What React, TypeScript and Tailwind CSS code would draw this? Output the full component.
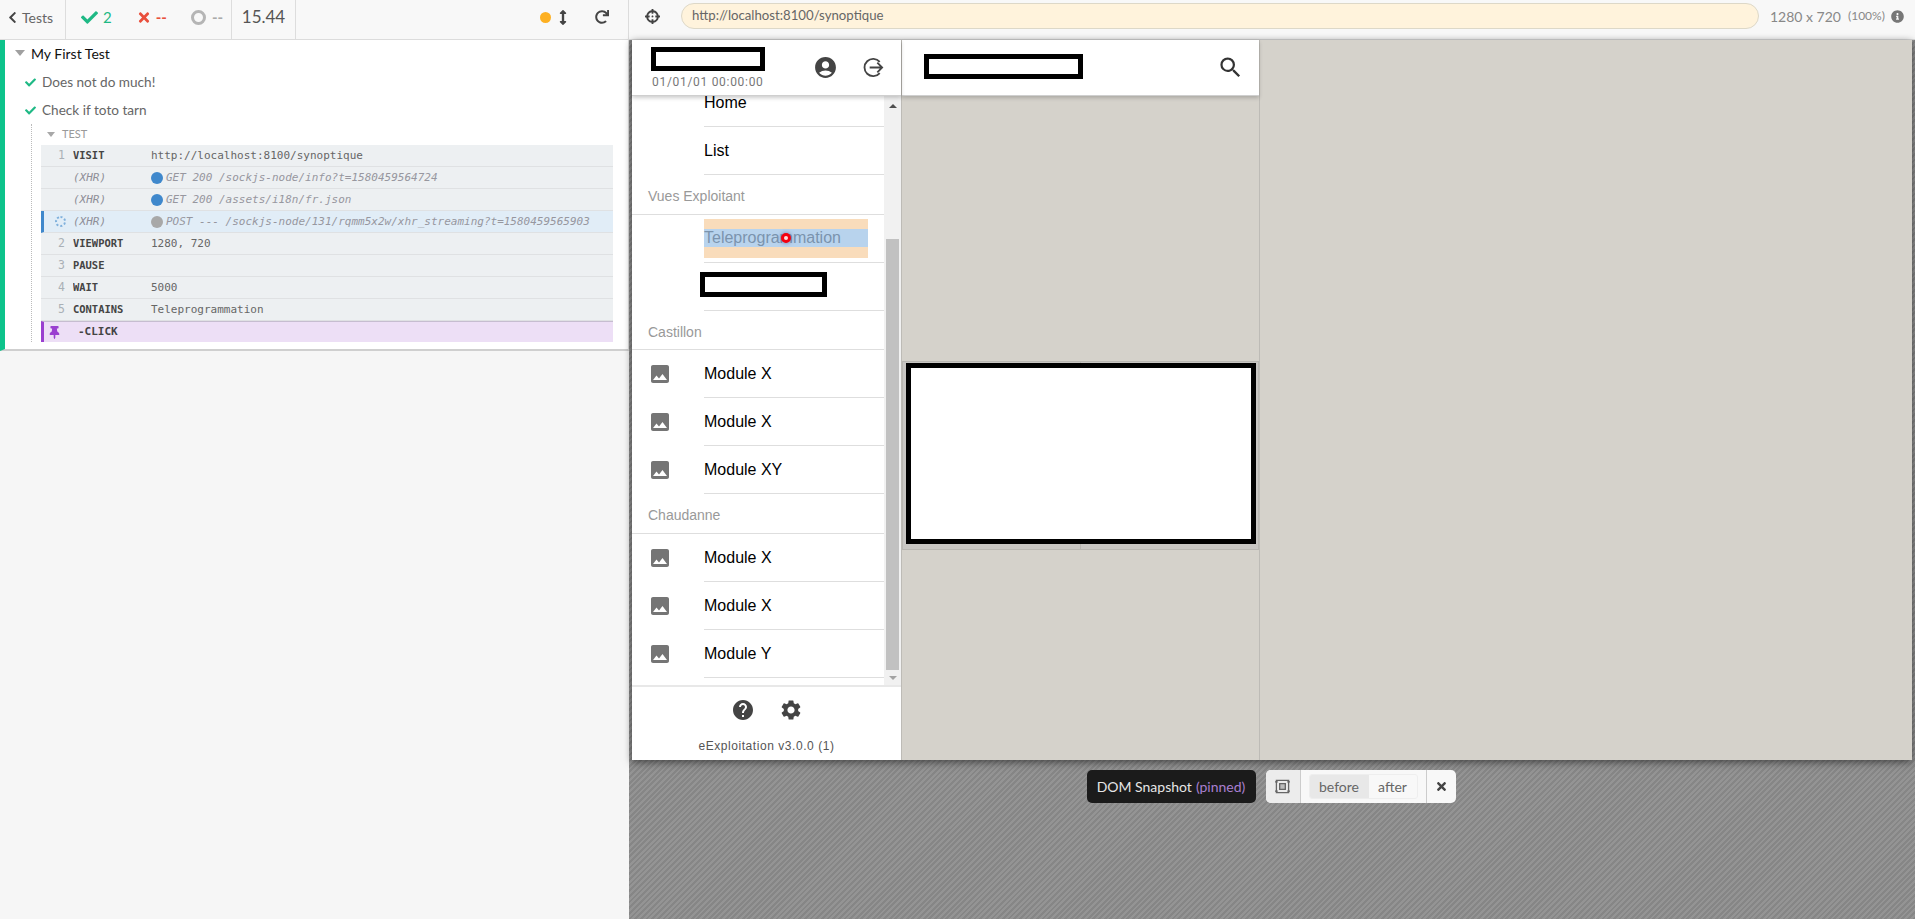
import { FaCheck, FaTimes, FaChevronLeft, FaRedo, FaArrowsAltV, FaCrosshairs, FaThumbtack, FaInfoCircle } from "react-icons/fa";
import { MdAccountCircle, MdSearch, MdImage, MdHelp, MdSettings } from "react-icons/md";

const commands = [
    { num: "1", name: "VISIT", msg: "http://localhost:8100/synoptique" },
    { name: "(XHR)", msg: "GET 200 /sockjs-node/info?t=1580459564724", dot: "bg-[#3f88cc]" },
    { name: "(XHR)", msg: "GET 200 /assets/i18n/fr.json", dot: "bg-[#3f88cc]" },
    { name: "(XHR)", msg: "POST --- /sockjs-node/131/rqmm5x2w/xhr_streaming?t=1580459565903", dot: "bg-[#a8a8a8]", pending: true },
    { num: "2", name: "VIEWPORT", msg: "1280, 720" },
    { num: "3", name: "PAUSE", msg: "" },
    { num: "4", name: "WAIT", msg: "5000" },
    { num: "5", name: "CONTAINS", msg: "Teleprogrammation" },
];

function CommandRow({ num, name, msg, dot, pending }: { num?: string; name: string; msg: string; dot?: string; pending?: boolean }) {
    const xhr = Boolean(dot);
    return (
        <div className={`h-[22px] flex items-center pt-px border-b border-[#dfe1e3] text-[11px] ${pending ? "bg-[#e1edf7] border-l-[3px] border-l-[#3f88cc]" : "bg-[#edf0f2] pl-[3px]"}`}>
            <div className="w-[29px] pr-[8px] text-right text-[11.5px] text-[#aab0b6]">
                {pending ? <span className="inline-block w-[11px] h-[11px] rounded-full border-2 border-dotted border-[#7fb0dc] mr-[-1px] align-middle" /> : num}
            </div>
            <div className={`w-[78px] ${xhr ? "italic text-[#8f8f98]" : "font-bold text-[#444] scale-x-[0.95] origin-left"}`}>{name}</div>
            {dot && <span className={`w-[12px] h-[12px] rounded-full mr-[3px] shrink-0 ${dot}`} />}
            <div className={`whitespace-nowrap ${xhr ? "italic text-[#97979f]" : "text-[#666]"}`}>{msg}</div>
        </div>
    );
}

function SpecLine({ text }: { text: string }) {
    return (
        <div className="h-[28px] flex items-center pl-[20px] text-[13.6px] text-[#666]">
            <FaCheck className="w-[11px] h-[11px] text-[#1fb985] mr-[6px]" />
            {text}
        </div>
    );
}

function RunnerBar() {
    return (
        <div className="h-10 flex bg-[#f8f8f8] border-b border-[#dcdcdc] border-r text-[#555] shadow-[0_1px_1px_rgba(0,0,0,0.06)]">
            <div className="w-[66px] flex items-center pl-[8px] pb-[5px] border-r border-[#ddd] text-[14px] text-[#666]">
                <FaChevronLeft className="w-[9px] h-[13px] mr-[5px] text-[#444]" />
                Tests
            </div>
            <div className="w-[166px] flex items-center pb-[5px] pl-[15px] border-r border-[#ddd] text-[15px]">
                <FaCheck className="w-[17px] h-[17px] text-[#1fb985]" />
                <span className="ml-[5px] text-[#1fb985]">2</span>
                <FaTimes className="w-[14px] h-[15px] ml-[25px] text-[#e94f3c]" />
                <span className="ml-[5px] text-[#e94f3c] font-bold">--</span>
                <span className="w-[15px] h-[15px] ml-[24px] rounded-full border-[3px] border-[#b5b5b5]" />
                <span className="ml-[6px] text-[#aaa] font-bold">--</span>
            </div>
            <div className="w-[64px] flex items-center justify-center pb-[5px] border-r border-[#ddd] text-[17px]">15.44</div>
            <div className="flex-1 flex items-center pb-[5px] pl-[244px]">
                <span className="w-[11px] h-[11px] rounded-full bg-[#fdb022]" />
                <FaArrowsAltV className="w-[12px] h-[15px] ml-[6px] text-[#444]" />
                <FaRedo className="w-[14px] h-[14px] ml-[26px] text-[#444]" />
            </div>
        </div>
    );
}

function ExitIcon() {
    return (
        <svg viewBox="0 0 24 24" className="w-[23px] h-[23px] text-[#444]" fill="none" stroke="currentColor" strokeWidth="1.9">
            <path d="M18.5 6.2A9 9 0 1 0 18.5 17.8" />
            <path d="M8 12h13M16 7l5 5-5 5" />
        </svg>
    );
}

function BlackBox({ className }: { className: string }) {
    return <div className={`border-[5px] border-black bg-white ${className}`} />;
}

function NavItem({ label, icon, box }: { label?: string; icon?: boolean; box?: boolean }) {
    return (
        <div className="h-12 flex items-center relative">
            <div className="w-[72px] pl-[16px] shrink-0">
                {icon && <MdImage className="w-[24px] h-[24px] text-[#757575]" />}
            </div>
            <div className="flex-1 h-full flex items-center border-b border-[#dedede] text-[16px] text-black">
                {box ? <BlackBox className="w-[127px] h-[25px] ml-[-4px] mb-[4px]" /> : label}
            </div>
        </div>
    );
}

function NavHeader({ label, short }: { label: string; short?: boolean }) {
    return (
        <div className={`flex items-center pl-[16px] pt-[4px] border-b border-[#dedede] text-[14px] text-[#999] ${short ? "h-[39px]" : "h-10"}`}>{label}</div>
    );
}

function Sidebar() {
    return (
        <div className="w-[270px] flex flex-col border-r border-[#bdbbb6] bg-white font-['Liberation_Sans',sans-serif]">
            <div className="h-14 flex border-b border-[#cfcfcf] shadow-[0_2px_4px_rgba(0,0,0,0.2)] relative z-10 bg-white">
                <div className="w-[146px] pl-[19px] pt-[7px]">
                    <BlackBox className="w-[114px] h-[24px]" />
                    <div className="mt-[2px] ml-px text-[12px] tracking-[0.7px] whitespace-nowrap text-[#777] font-['Roboto',sans-serif]">01/01/01 00:00:00</div>
                </div>
                <div className="flex items-center pb-[1px]">
                    <MdAccountCircle className="w-[25px] h-[25px] ml-[35px] text-[#444]" />
                    <span className="ml-[24px]"><ExitIcon /></span>
                </div>
            </div>
            <div className="h-[589px] flex overflow-hidden">
                <div className="flex-1 min-w-0">
                    <div className="mt-[-17px]">
                        <NavItem label="Home" />
                        <NavItem label="List" />
                        <NavHeader label="Vues Exploitant" />
                        <div className="h-12 flex items-center relative">
                            <div className="w-[72px] shrink-0" />
                            <div className="flex-1 h-full flex items-center border-b border-[#dedede]">
                                <div className="relative w-[164px] h-[39px] bg-[#f9dcbb] flex items-center mb-[1px]">
                                    <div className="w-full h-[18px] bg-[#b8d3ed] text-[16px] leading-[18px] text-[#7b93ad]">Teleprogrammation</div>
                                    <span className="absolute left-[77px] top-[14.5px] w-[10px] h-[10px] rounded-full bg-[#f5000f] border-[3px] border-[#f5000f] shadow-[0_0_4px_rgba(60,60,120,0.6)]">
                                        <span className="block w-[4px] h-[4px] rounded-full bg-[#ffdcdc]" />
                                    </span>
                                </div>
                            </div>
                        </div>
                        <NavItem box />
                        <NavHeader label="Castillon" short />
                        <NavItem label="Module X" icon />
                        <NavItem label="Module X" icon />
                        <NavItem label="Module XY" icon />
                        <NavHeader label="Chaudanne" />
                        <NavItem label="Module X" icon />
                        <NavItem label="Module X" icon />
                        <NavItem label="Module Y" icon />
                    </div>
                </div>
                <div className="w-[17px] bg-[#f1f1f1] flex flex-col items-center">
                    <div className="h-[17px] flex items-center justify-center pt-[2px]">
                        <span className="border-x-[4px] border-x-transparent border-b-[4px] border-b-[#505050]" />
                    </div>
                    <div className="w-[13px] h-[431px] mt-[126px] bg-[#c1c1c1]" />
                    <div className="h-[15px] flex items-center justify-center">
                        <span className="border-x-[4px] border-x-transparent border-t-[4px] border-t-[#a3a3a3]" />
                    </div>
                </div>
            </div>
            <div className="flex-1 border-t-2 border-[#e8e8e8] flex flex-col items-center">
                <div className="flex items-center gap-[24px] mt-[11px]">
                    <MdHelp className="w-[24px] h-[24px] text-[#444]" />
                    <MdSettings className="w-[24px] h-[24px] text-[#444]" />
                </div>
                <div className="mt-[15px] text-[12px] tracking-[0.55px] text-[#555]">eExploitation v3.0.0 (1)</div>
            </div>
        </div>
    );
}

function App() {
    return (
        <div className="w-[1915px] h-[919px] overflow-hidden flex font-['Lato',sans-serif] text-[13px]">
            {/* command log */}
            <div className="w-[629px] shrink-0 flex flex-col bg-[#f6f6f6]">
                <RunnerBar />
                <div className="bg-white h-[311px] border-l-[5px] border-l-[#0dc38b] border-r border-r-[#ddd] border-b-2 border-b-[#cfcfcf]">
                    <div className="h-[26px] flex items-center pl-[10px] text-[14px] text-[#111]">
                        <span className="border-x-[5px] border-x-transparent border-t-[6px] border-t-[#a0a0a0] mr-[6px]" />
                        My First Test
                    </div>
                    <div className="pt-[2px]">
                        <SpecLine text="Does not do much!" />
                        <SpecLine text="Check if toto tarn" />
                    </div>
                    <div className="ml-[26px] mr-[15px] pl-[9px] border-l border-dotted border-l-[#bbb]">
                        <div className="h-[21px] flex items-center pl-[6px] text-[11px] text-[#999]">
                            <span className="border-x-[4px] border-x-transparent border-t-[5px] border-t-[#a8a8a8] mr-[7px]" />
                            TEST
                        </div>
                        <div className="font-['DejaVu_Sans_Mono',monospace]">
                            {commands.map((c, i) => (
                                <CommandRow key={i} {...c} />
                            ))}
                            <div className="h-[21px] flex items-center bg-[#eddff6] border-l-[3px] border-l-[#9a3fd0] border-t border-t-[#c6bdd0] text-[11px]">
                                <FaThumbtack className="w-[11px] h-[13px] ml-[5px] text-[#9a3fd0]" />
                                <span className="ml-[18px] font-bold text-[#444] whitespace-nowrap">-CLICK</span>
                            </div>
                        </div>
                    </div>
                </div>
            </div>

            {/* preview */}
            <div className="flex-1 flex flex-col min-w-0">
                <div className="h-10 flex items-center bg-[#f8f8f8] border-b border-[#dcdcdc] pb-[7px] shrink-0">
                    <FaCrosshairs className="w-[15px] h-[15px] ml-[16px] text-[#444]" />
                    <div className="w-[1078px] h-[26px] ml-[21px] flex items-center rounded-full bg-[#fff3dc] border border-[#ddd8c8] pl-[10px] text-[13.2px] text-[#666]">
                        http://localhost:8100/synoptique
                    </div>
                    <span className="ml-[11px] text-[14px] text-[#888]">1280 x 720</span>
                    <span className="ml-[7px] text-[12px] text-[#888]">(100%)</span>
                    <FaInfoCircle className="w-[13px] h-[13px] ml-[6px] text-[#777]" />
                </div>
                <div className="flex-1 flex flex-col items-center pl-[3px] pr-[3px] bg-[repeating-linear-gradient(-45deg,#868686_0,#868686_2px,#949494_2px,#949494_4px)]">
                    <div className="w-[1280px] h-[720px] shrink-0 flex bg-[#d5d2cb] shadow-[0_2px_8px_rgba(0,0,0,0.55)]">
                        <Sidebar />
                        <div className="w-[358px] flex flex-col border-r border-[#bdbbb6]">
                            <div className="h-14 flex items-center justify-between bg-white pl-[22px] pr-[15px] shadow-[0_2px_4px_rgba(0,0,0,0.2)] border-b border-[#cfcfcf]">
                                <BlackBox className="w-[159px] h-[25px] mt-[-2px]" />
                                <MdSearch className="w-[27px] h-[27px] text-[#333]" />
                            </div>
                            <div className="mt-[265px] h-[189px] flex bg-[#c8c6c3] border border-[#b8b6b1] relative">
                                <div className="absolute left-[177px] inset-y-0 w-px bg-[#b8b6b1]" />
                                <BlackBox className="relative w-[350px] h-[181px] ml-[3px] mt-[1px]" />
                            </div>
                        </div>
                    </div>
                    <div className="flex mt-[10px] mr-[2px] gap-[10px]">
                        <div className="w-[169px] h-[33px] flex items-center justify-center rounded-[5px] bg-[#1b1b1b] text-[14px] text-[#e6e6e6] whitespace-nowrap">
                            DOM Snapshot<span className="ml-[4px] text-[#a97fd0]">(pinned)</span>
                        </div>
                        <div className="w-[190px] h-[33px] flex rounded-[5px] bg-[#f8f8f8] text-[14px] text-[#666] overflow-hidden">
                            <div className="w-[35px] flex items-center justify-center bg-[#ececec] border-r border-[#ccc]">
                                <svg viewBox="0 0 16 16" className="w-[15px] h-[15px] text-[#666]" fill="none" stroke="currentColor" strokeWidth="1.4">
                                    <path d="M1.5 1.5h13v13h-13z" />
                                    <path d="M5 5h6v6H5z" fill="currentColor" fillOpacity=".35" />
                                    <path d="M0 3h3M13 3h3M0 13h3M13 13h3" />
                                </svg>
                            </div>
                            <div className="w-[126px] flex items-center pl-[8px] border-r border-[#ccc]">
                                <div className="w-[109px] h-[25px] flex rounded-[3px] border border-[#eee] overflow-hidden">
                                    <span className="w-[59px] flex items-center justify-center bg-[#e8e8e8]">before</span>
                                    <span className="flex-1 flex items-center justify-center">after</span>
                                </div>
                            </div>
                            <div className="flex-1 flex items-center justify-center">
                                <FaTimes className="w-[11px] h-[13px] text-[#444]" />
                            </div>
                        </div>
                    </div>
                </div>
            </div>
        </div>
    );
}

export default App;
